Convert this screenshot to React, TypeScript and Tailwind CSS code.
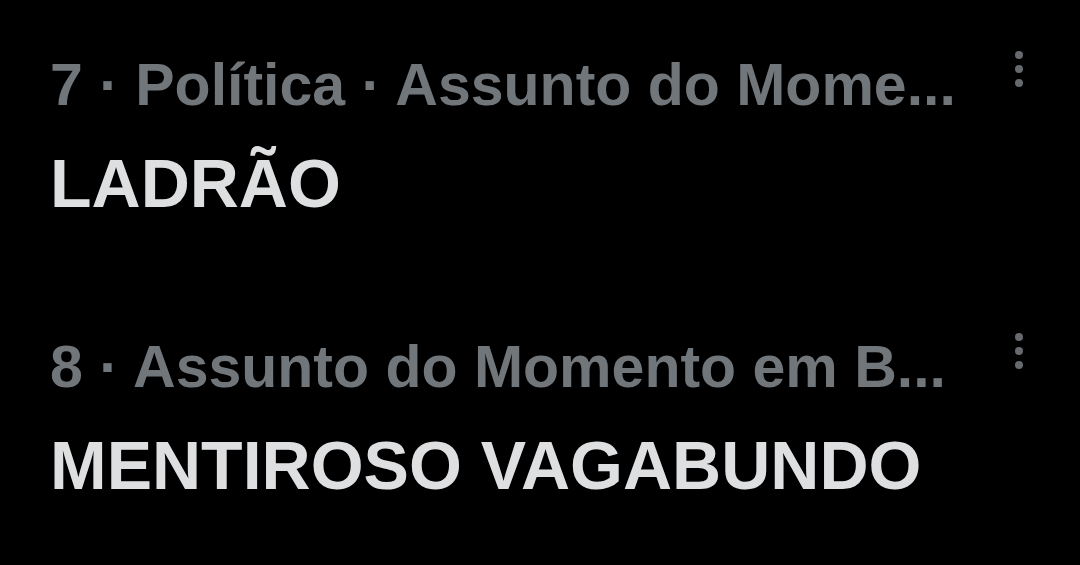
const trends = [
  { meta: '7 · Política · Assunto do Mome...', name: 'LADRÃO' },
  { meta: '8 · Assunto do Momento em B...', name: 'MENTIROSO VAGABUNDO' },
]

function MoreIcon() {
  return (
    <svg width="10" height="38" viewBox="0 0 10 38" className="shrink-0 fill-[#66696d]">
      <circle cx="5" cy="5" r="4" />
      <circle cx="5" cy="19" r="4" />
      <circle cx="5" cy="33" r="4" />
    </svg>
  )
}

export default function App() {
  return (
    <div className="w-[1080px] h-[565px] bg-black overflow-hidden font-['Liberation_Sans',Arial,sans-serif]">
      <div className="flex flex-col gap-[109px] pt-[50px] pl-[50px] pr-[56px]">
        {trends.map((t) => (
          <div key={t.name} className="flex justify-between">
            <div className="whitespace-nowrap">
              <p className="text-[59px] leading-[71px] font-bold text-[#71767b]">{t.meta}</p>
              <p className="mt-[22px] text-[68px] leading-[80px] font-bold text-[#dedfe0]">{t.name}</p>
            </div>
            <MoreIcon />
          </div>
        ))}
      </div>
    </div>
  )
}
